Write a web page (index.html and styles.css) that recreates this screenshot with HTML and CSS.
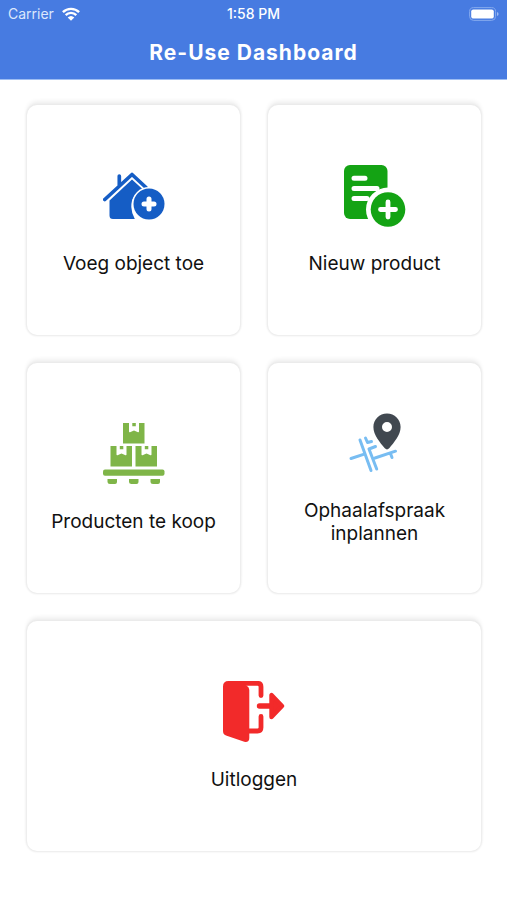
FILE: index.html
```html
<!DOCTYPE html>
<html lang="nl">
<head>
<meta charset="utf-8">
<meta name="viewport" content="width=device-width, initial-scale=1">
<title>Re-Use Dashboard</title>
<link rel="stylesheet" href="styles.css">
</head>
<body>
<header class="header">
  <div class="status">
    <span class="carrier">Carrier
      <svg class="wifi" viewBox="0 0 18 14" aria-hidden="true">
        <path d="M.9 5.200a11.500 11.500 0 0 1 16.200 0M3.700 8.100a7.500 7.500 0 0 1 10.600 0" fill="none" stroke="#fff" stroke-width="2.400"/>
        <path d="M9 13.800 5.700 10.500a4.800 4.800 0 0 1 6.600 0z" fill="#fff"/>
      </svg>
    </span>
    <span class="time">1:58 PM</span>
    <svg class="battery" viewBox="0 0 30 14" aria-hidden="true">
      <rect x=".6" y=".6" width="26" height="12.800" rx="4" fill="none" stroke="#85a9ee" stroke-width="1"/>
      <rect x="2.200" y="2.400" width="22.600" height="9.200" rx="2.200" fill="#fff"/>
      <path d="M28 5v4q1.600-.6 1.600-2T28 5z" fill="#9dbaf2"/>
    </svg>
  </div>
  <h1 class="title">Re-Use Dashboard</h1>
</header>
<main class="grid">
  <button class="card" type="button">
    <svg class="icon" viewBox="0 0 62 62" aria-hidden="true">
      <path d="M1.800 34.500 29 9.500 43 22.500M16.300 20V11" fill="none" stroke="#155dc5" stroke-width="3.700" stroke-linecap="round" stroke-linejoin="round"/>
      <path d="M6.500 35.500 29 14.500 40.500 25Q28 29 28.300 42q.2 6 3.500 12H10q-3.500 0-3.500-3.500z" fill="#155dc5"/>
      <circle cx="46" cy="39" r="17" fill="#fff"/>
      <circle cx="46" cy="39" r="15.500" fill="#155dc5"/>
      <path d="M46 34v10M41 39h10" stroke="#fff" stroke-width="5" stroke-linecap="round"/>
    </svg>
    <span class="label">Voeg object toe</span>
  </button>
  <button class="card" type="button">
    <svg class="icon" viewBox="0 0 62 62" aria-hidden="true">
      <rect y="0" width="43.500" height="54" rx="6" fill="#14a314"/>
      <path d="M10 13.300h11M10 23.500h23M10 33.500h13" stroke="#fff" stroke-width="5" stroke-linecap="round"/>
      <circle cx="44" cy="44.500" r="22" fill="#fff"/>
      <circle cx="44" cy="44.500" r="17.300" fill="#14a314"/>
      <path d="M44 37v15M36.500 44.500h15" stroke="#fff" stroke-width="4.800" stroke-linecap="round"/>
    </svg>
    <span class="label">Nieuw product</span>
  </button>
  <button class="card" type="button">
    <svg class="icon" viewBox="0 0 62 62" aria-hidden="true">
      <g fill="#7fb548">
        <path id="box" d="M20 0H26v8.500q0 1 1 .7l4-1.700 4 1.700q1 .3 1-.7V0h5.500v20.500h-21.500zM29.300 0h3.500v3.300h-3.500z"/>
        <use href="#box" x="-12.500" y="23"/>
        <use href="#box" x="12.500" y="23"/>
        <rect x="0" y="46.500" width="61.500" height="6.200" rx="2"/>
        <path d="M4.500 56h9.500v3q0 2-2 2H7q-2.500 0-2.500-2zM26 56h9.500v3q0 2-2 2h-5q-2.500 0-2.500-2zM47.500 56h9.500v3q0 2-2 2h-5q-2.500 0-2.500-2z"/>
      </g>
    </svg>
    <span class="label">Producten te koop</span>
  </button>
  <button class="card" type="button">
    <svg class="icon" viewBox="0 0 62 62" aria-hidden="true">
      <path d="M7 46.500 19.500 42.300M16 28 27 58.500M32.700 57 25 37l6.500-2.500M21.500 26l2 4.500 4-1M31 46 51.500 39.200M46.500 41.500l1.500 4" fill="none" stroke="#78bdf2" stroke-width="3" stroke-linecap="round" stroke-linejoin="round"/>
      <path fill-rule="evenodd" d="M43 1.500c7.600 0 13.600 5.900 13.600 13.500 0 8-6.600 15.500-11.400 21.300q-2.200 2.300-4.400 0C36 30.500 29.400 23 29.400 15 29.400 7.400 35.400 1.500 43 1.500zM43 10a5 5 0 1 0 0 10 5 5 0 0 0 0-10z" fill="#414850"/>
    </svg>
    <span class="label">Ophaalafspraak inplannen</span>
  </button>
  <button class="card wide" type="button">
    <svg class="icon" viewBox="0 0 62 62" aria-hidden="true">
      <path d="M8 2.300h26.500q3.500 0 3.500 3.500v8.700M24 50h10.500q3.500 0 3.500-3.500V35.500" fill="none" stroke="#f22a2a" stroke-width="4.800" stroke-linecap="round"/>
      <path d="M5.500 0H15L23.500 4.500q2.800 1.500 2.800 4.500v48q0 4.500-5 3.800L3 54.500Q0 53.500 0 50V5.500Q0 0 5.500 0z" fill="#f22a2a"/>
      <path d="M36.500 25h14" stroke="#f22a2a" stroke-width="5.400" stroke-linecap="round"/>
      <path d="M48.500 14v22L59 25z" fill="#f22a2a" stroke="#f22a2a" stroke-width="4.400" stroke-linejoin="round"/>
    </svg>
    <span class="label">Uitloggen</span>
  </button>
</main>
</body>
</html>
```
FILE: styles.css
```css
* {
  box-sizing: border-box;
}

body {
  margin: 0;
  background: #fff;
  font-family: Inter, "Liberation Sans", sans-serif;
}

.header {
  padding: 4px 8px 12px;
  background: #477be1;
  border-bottom: 1px solid #9dbdf3;
  color: #fff;
}

.status {
  display: grid;
  grid-template-columns: 1fr auto 1fr;
  align-items: center;
  height: 20px;
  font-size: 14px;
  line-height: 20px;
}

.carrier {
  display: flex;
  align-items: center;
  gap: 8px;
  color: #dce7fc;
}

.wifi {
  width: 18px;
  height: 14px;
}

.time {
  font-weight: 500;
}

.battery {
  width: 30px;
  height: 14px;
  justify-self: end;
}

.title {
  margin: 15px 0 0;
  font-size: 21px;
  line-height: 28px;
  font-weight: 700;
  letter-spacing: 1px;
  text-align: center;
}

.grid {
  display: grid;
  grid-template-columns: 1fr 1fr;
  gap: 28px;
  padding: 25px 26px 48px 27px;
}

.card {
  display: flex;
  flex-direction: column;
  align-items: center;
  justify-content: center;
  gap: 25px;
  min-height: 230px;
  padding: 12px 20px;
  border: 0;
  border-radius: 10px;
  background: #fff;
  box-shadow: 0 0 2px 1px #e9e9e9, 0 -4px 4px #f0f0f0;
  color: #111;
  font-family: inherit;
  font-size: 19px;
  line-height: 23px;
  cursor: pointer;
}

.wide {
  grid-column: 1 / -1;
}

.icon {
  width: 62px;
  height: 62px;
}
```
